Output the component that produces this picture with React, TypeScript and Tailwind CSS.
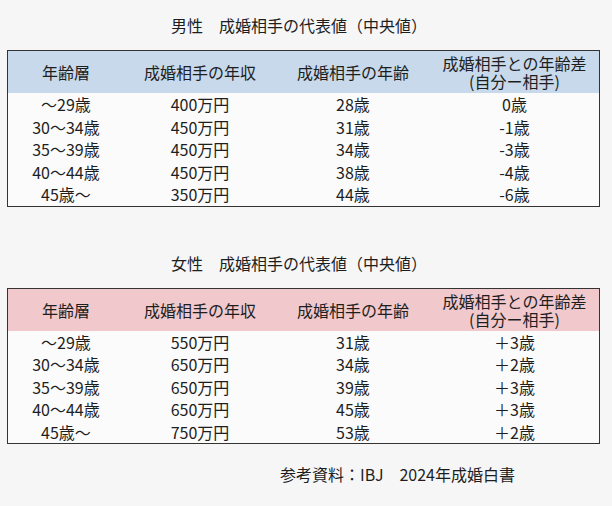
const font = { fontFamily: '"Noto Sans CJK JP", "Noto Sans", sans-serif' };

type Row = [string, string, string, string];

const male: Row[] = [
  ["～29歳", "400万円", "28歳", "0歳"],
  ["30～34歳", "450万円", "31歳", "-1歳"],
  ["35～39歳", "450万円", "34歳", "-3歳"],
  ["40～44歳", "450万円", "38歳", "-4歳"],
  ["45歳～", "350万円", "44歳", "-6歳"],
];

const female: Row[] = [
  ["～29歳", "550万円", "31歳", "＋3歳"],
  ["30～34歳", "650万円", "34歳", "＋2歳"],
  ["35～39歳", "650万円", "39歳", "＋3歳"],
  ["40～44歳", "650万円", "45歳", "＋3歳"],
  ["45歳～", "750万円", "53歳", "＋2歳"],
];

const cols = "grid grid-cols-[116px_152px_154px_1fr]";

const StatTable = ({ rows, headBg }: { rows: Row[]; headBg: string }) => (
  <div className="mx-[7px] w-[593px] border-[1.5px] border-[#333] bg-[#fbfbfb]">
    <div className={`${cols} h-[42px] items-center text-center ${headBg}`}>
      <div>年齢層</div>
      <div>成婚相手の年収</div>
      <div>成婚相手の年齢</div>
      <div className="flex flex-col items-center">
        <div className="h-[18px] leading-[18px]">成婚相手との年齢差</div>
        <div className="h-[18px] leading-[18px]">(自分ー相手)</div>
      </div>
    </div>
    {rows.map((r, i) => (
      <div key={i} className={`${cols} h-[22.5px] items-center text-center leading-[22px]`}>
        {r.map((c, j) => (
          <div key={j}>{c}</div>
        ))}
      </div>
    ))}
  </div>
);

export default function App() {
  return (
    <div
      className="relative w-[612px] h-[506px] overflow-hidden bg-[#f6f6f7] text-[16px] text-[#1e1e1e]"
      style={font}
    >
      <div className="pt-[13px] pr-[14px] text-center leading-[24px]">男性　成婚相手の代表値（中央値）</div>
      <div className="mt-[13px]">
        <StatTable rows={male} headBg="bg-[#c7d9ea]" />
      </div>

      <div className="mt-[44px] pr-[14px] text-center leading-[24px]">女性　成婚相手の代表値（中央値）</div>
      <div className="mt-[13px]">
        <StatTable rows={female} headBg="bg-[#f1c9cd]" />
      </div>

      <div className="mt-[18px] pl-[280px] leading-[24px]">参考資料：IBJ　2024年成婚白書</div>
    </div>
  );
}
